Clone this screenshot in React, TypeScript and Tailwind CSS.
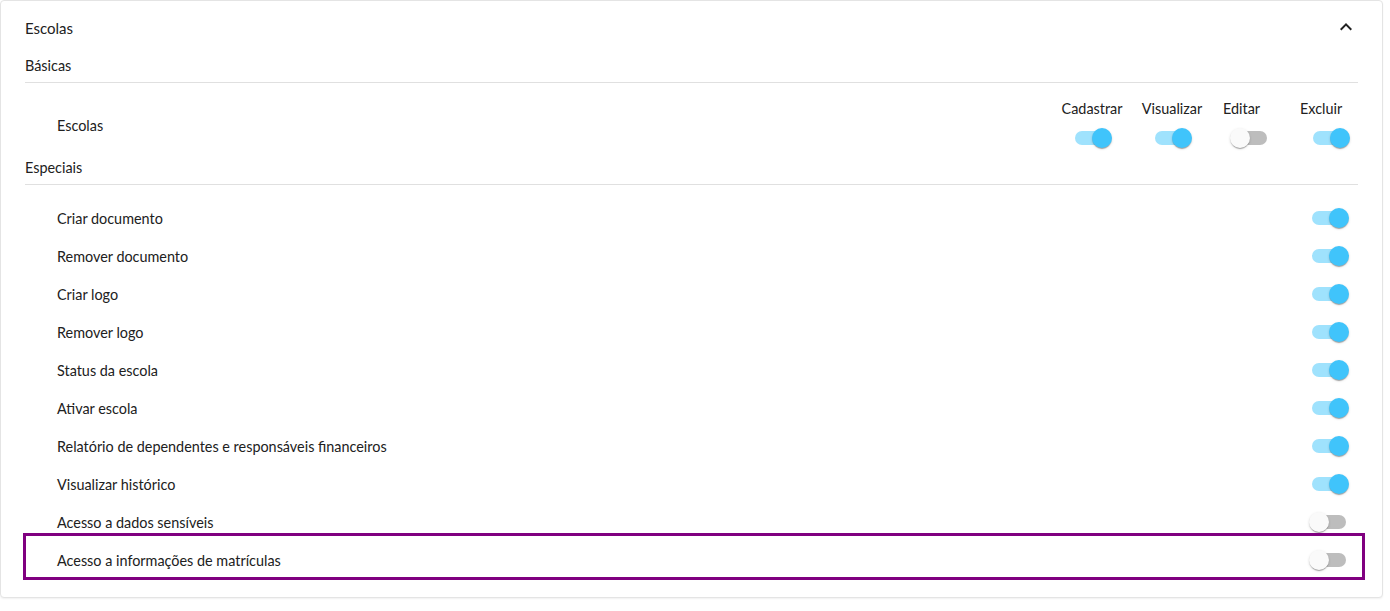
import React from "react";

const FONT = { fontFamily: "Lato, 'Liberation Sans', sans-serif" };

function Switch({ on }: { on: boolean }) {
  return (
    <div className="relative w-[58px] h-[38px] shrink-0">
      <div
        className={
          "absolute left-[12px] top-[12px] w-[34px] h-[14px] rounded-full " +
          (on ? "bg-[#9fe2fd]" : "bg-[#bdbdbd]")
        }
      />
      <div
        className={
          "absolute top-[9px] w-[20px] h-[20px] rounded-full shadow-[0_2px_1px_-1px_rgba(0,0,0,0.2),0_1px_1px_0_rgba(0,0,0,0.14),0_1px_3px_0_rgba(0,0,0,0.12)] " +
          (on ? "left-[29px] bg-[#40c4fb]" : "left-[9px] bg-[#fafafa]")
        }
      />
    </div>
  );
}

const especiais: { label: string; on: boolean }[] = [
  { label: "Criar documento", on: true },
  { label: "Remover documento", on: true },
  { label: "Criar logo", on: true },
  { label: "Remover logo", on: true },
  { label: "Status da escola", on: true },
  { label: "Ativar escola", on: true },
  { label: "Relatório de dependentes e responsáveis financeiros", on: true },
  { label: "Visualizar histórico", on: true },
  { label: "Acesso a dados sensíveis", on: false },
];

export default function App() {
  return (
    <div className="w-[1390px] h-[611px] bg-white text-[#212121]" style={FONT}>
      <div className="w-[1383px] h-[598px] rounded-[4px] border border-[#e4e4e4] shadow-[0_1px_2px_rgba(0,0,0,0.06)] bg-white px-6 pt-[14px]">
        {/* Header */}
        <div className="flex items-center justify-between h-[24px]">
          <span className="text-[15px] leading-[24px] pt-px">Escolas</span>
          <svg width="24" height="24" viewBox="0 0 24 24" fill="#212121">
            <path d="M12 8l-6 6 1.41 1.41L12 10.83l4.59 4.58L18 14z" />
          </svg>
        </div>

        {/* Básicas */}
        <div className="mt-[17px] pb-[6px] border-b border-[#e0e0e0] text-[14.4px] leading-[20px]">
          Básicas
        </div>
        <div className="flex items-center justify-between pl-8 mt-[16px] text-[14.4px] leading-[20px]">
          <span className="pb-[4px]">Escolas</span>
          <div className="flex -mr-px">
            <div className="w-[60px] flex flex-col items-center">
              <span className="whitespace-nowrap">Cadastrar</span>
              <Switch on={true} />
            </div>
            <div className="w-[60px] ml-[20px] flex flex-col items-center">
              <span className="whitespace-nowrap">Visualizar</span>
              <Switch on={true} />
            </div>
            <div className="w-[58px] ml-[19px] flex flex-col items-start">
              <span className="ml-[2px] whitespace-nowrap">Editar</span>
              <Switch on={false} />
            </div>
            <div className="w-[59px] ml-[21px] flex flex-col items-start">
              <span className="whitespace-nowrap">Excluir</span>
              <div className="ml-px">
                <Switch on={true} />
              </div>
            </div>
          </div>
        </div>

        {/* Especiais */}
        <div className="mt-px pb-[6px] border-b border-[#e0e0e0] text-[14.4px] leading-[20px]">
          Especiais
        </div>
        <div className="mt-[14px] text-[14.4px] leading-[20px]">
          {especiais.map((r) => (
            <div key={r.label} className="flex items-center justify-between h-[38px] pl-8">
              <span className="pt-[2px]">{r.label}</span>
              <Switch on={r.on} />
            </div>
          ))}
          <div className="relative flex items-center justify-between h-[38px] pl-8">
            <span className="pt-[2px]">Acesso a informações de matrículas</span>
            <Switch on={false} />
            <div className="absolute top-[-8px] bottom-[-1px] left-[-2px] right-[-7px] border-[3px] border-[#800080] pointer-events-none" />
          </div>
        </div>
      </div>
    </div>
  );
}
